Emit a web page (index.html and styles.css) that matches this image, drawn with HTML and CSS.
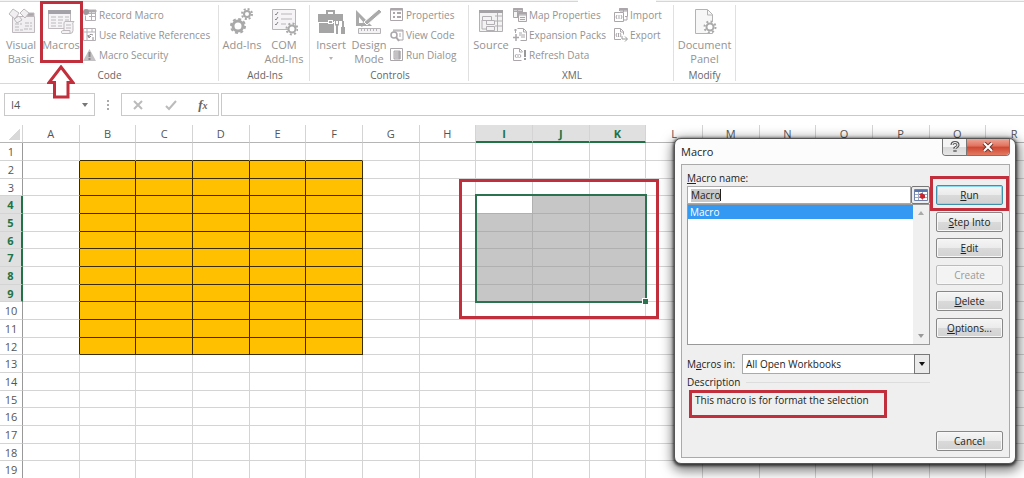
FILE: index.html
```
<!DOCTYPE html>
<html lang="en">
<head>
<meta charset="utf-8">
<title>Macro</title>
<link rel="stylesheet" href="styles.css">
</head>
<body>
<main class="app">
  <div class="tabstrip"><span class="tabstrip-active"></span></div>
  <div class="ribbon">
    <section class="group group-code">
      <div class="group-body">
        <button class="big"><svg width="28" height="28" viewBox="0 0 28 28" fill="#f1eff1" stroke="#bdb9bd"><path d="M5.500 8.500h22v16h-22z"/><path d="M20 5h7v3h-7z" fill="#a9a5a9"/><path d="M8 16h7M8 19h5M8 22h8M18 15h7M18 18h7M17 21h8" stroke-dasharray="4 1"/><path d="M2 6l4-5 6 4-4 6zM13 5l4-4 5 4-4 5zM7 11l5-3 3 4-5 3z"/></svg><span>Visual<br>Basic</span></button>
        <button class="big marked"><svg width="28" height="28" viewBox="0 0 28 28" fill="#f5f3f5" stroke="#bdb9bd"><path d="M1.500 2.500h22v18h-22z"/><path d="M1 2h23v4H1z" fill="#a5a1a8" stroke="none"/><path d="M4 9h5M11 9h5M18 9h4M4 12h5M11 12h5M18 12h4M4 15h5M11 15h4M4 18h5M11 18h4"/><path d="M18 13.500h9q-2 1-1 4v5q0 3-3 3h-8q-2-3 2-3V15q0-1 1-1.500zM16 22.500h7v3M19 17h5M19 20h5"/></svg><span>Macros</span></button>
        <div class="list">
          <button class="small"><svg width="14" height="14" viewBox="0 0 14 14" fill="none" stroke="#b4b0b4"><path d="M4.500 2.500h8v10h-10v-5M5 5.500h7M6 8.500h6M8.500 3v9"/><path d="M4 2h9v2H4z" fill="#aaa6aa"/><circle cx="3" cy="4" r="3" fill="#9d999d" stroke="none"/></svg>Record Macro</button>
          <button class="small"><svg width="14" height="14" viewBox="0 0 14 14" fill="none" stroke="#b4b0b4"><path d="M.5.500h12v12H.5zM1 4h12M4 1v12M9 1v3M4 8h2"/><path d="M6 9q0-4 4-2m-5 0l1 3 2-2M10 9v3" stroke="#8f8b8f"/></svg>Use Relative References</button>
          <button class="small"><svg width="14" height="14" viewBox="0 0 14 14"><path d="M6.500 1L13 13H0z" fill="#c4c1c4"/><path d="M6.500 4v5M6.500 10v2" stroke="#888" stroke-width="2"/></svg>Macro Security</button>
        </div>
      </div>
      <h2>Code</h2>
    </section>
    <section class="group group-addins">
      <div class="group-body">
        <button class="big"><svg width="28" height="28" viewBox="0 0 28 28" fill="none" stroke="#a9a9a9"><circle cx="10" cy="18" r="5" stroke-width="3"/><circle cx="10" cy="18" r="7" stroke-width="2" stroke-dasharray="3 2.500"/><circle cx="19" cy="6" r="3" stroke-width="2"/><circle cx="19" cy="6" r="5" stroke-width="2" stroke-dasharray="2 1.930"/></svg><span>Add-Ins</span></button>
        <button class="big"><svg width="28" height="28" viewBox="0 0 28 28" fill="none" stroke="#b8b6b8"><path d="M2.500 1.500h23v20h-23z" fill="#f6f4f6"/><path d="M11 6h11M11 11h11M11 16h5"/><path d="M5 6l1 1 2-3M5 11l1 1 2-3M5 16l1 1 2-3" stroke="#888"/><circle cx="22" cy="21" r="3.500" stroke="#aaa" stroke-width="2" fill="#fff"/><circle cx="22" cy="21" r="5.500" stroke="#aaa" stroke-width="2" stroke-dasharray="2 2.300"/></svg><span>COM<br>Add-Ins</span></button>
      </div>
      <h2>Add-Ins</h2>
    </section>
    <section class="group group-controls">
      <div class="group-body">
        <button class="big"><svg width="28" height="28" viewBox="0 0 28 28" fill="#a5a5a5"><path d="M9 6V2h9v4h-2V4h-5v2z"/><path d="M1 6h25v8H1zM2 15h15v10H2z"/><path d="M11 12h5v4h-5z" fill="#fff"/><path d="M12 13h3v2h-3z"/><path d="M17 13h11v14H17z" fill="#fff"/><path d="M18 13v4l1 1v8h2v-8l1-1v-4h-1v3h-2v-3zM25 13h2v6h-2zM24 19h4v7h-4z"/></svg><span>Insert</span><i class="caret"></i></button>
        <button class="big"><svg width="28" height="28" viewBox="0 0 28 28"><path d="M1 2v16h16zm3 7l5 6H4z" fill="#aaa"/><path d="M9 14l3 3L27 4l-3-3z" fill="#aaa" stroke="#fff"/><path d="M8 14l-2 5 5-2z" fill="#aaa"/><path d="M3.500 20.500h22v5h-22z" fill="#f4f3f4" stroke="#b5b3b5"/><path d="M6.500 21v2M9.500 21v2M12.500 21v2M15.500 21v2M18.500 21v2M21.500 21v2" stroke="#b5b3b5"/></svg><span>Design<br>Mode</span></button>
        <div class="list">
          <button class="small"><svg width="14" height="14" viewBox="0 0 14 14" fill="none" stroke="#aaa6aa"><path d="M.5.500h12v12H.5z"/><path d="M1 1.500h12M3 5h2M3 9h2M7 5h4M7 9h4" stroke-width="2"/></svg>Properties</button>
          <button class="small"><svg width="14" height="14" viewBox="0 0 14 14" fill="none" stroke="#aaa6aa"><path d="M3 2h10v10H9M3 3h10M9 6h2M9 8h2"/><circle cx="4" cy="7" r="3" stroke-width="1.500"/><path d="M6 9l3 4" stroke-width="2"/></svg>View Code</button>
          <button class="small"><svg width="14" height="14" viewBox="0 0 14 14" fill="none" stroke="#aaa6aa"><path d="M.5.500h12v12H.5z"/><path d="M4 3h6v8H4zM5 5h4M5 7h4M5 9h4" fill="#ddd"/><path d="M9.500 3v8" stroke-width="2"/></svg>Run Dialog</button>
        </div>
      </div>
      <h2>Controls</h2>
    </section>
    <section class="group group-xml">
      <div class="group-body">
        <button class="big"><svg width="28" height="28" viewBox="0 0 28 28" fill="#f4f3f4" stroke="#b3b0b3"><path d="M2.500 2.500h23v21h-23z"/><path d="M2 2h24v3H2z" fill="#a6a3a6" stroke="none"/><path d="M5.500 8.500h9v4h-9zM9.500 12.500h8v4h-8zM9.500 18.500h8v4h-8zM5 12v9h4M18 8h7M18 13h7M18 18h7M20.500 5v18" /></svg><span>Source</span></button>
        <div class="list">
          <button class="small"><svg width="14" height="14" viewBox="0 0 14 14" fill="#f7f6f7" stroke="#aaa6aa"><path d="M.5.500h9v9h-9zM1 3.500h8M4.500 1v8"/><path d="M5.500 4.500h8v9h-8zM6 7h7M7 9.500h5M7 11.500h5"/><path d="M0 1.500h10M5 5.500h9" stroke-width="2"/></svg>Map Properties</button>
          <button class="small"><svg width="14" height="14" viewBox="0 0 14 14" fill="none" stroke="#aaa6aa"><path d="M4.500.500h6l3 3v9h-6M10.500 1v3h3M6 5h3M6 7h6M8 9h4M1 2h3M2.500 1v4"/><path d="M0 9.500h6M3 6v7" stroke-width="1.500"/></svg>Expansion Packs</button>
          <button class="small"><svg width="14" height="14" viewBox="0 0 14 14" fill="none" stroke="#aaa6aa"><path d="M8.500 12.500h-8V.500h6l3 3M6.500 1v3h3"/><path d="M2 8l1.500-2M2 8l1.500 2M8 8L6.500 6M8 8l-1.500 2M5 6v4"/><path d="M12 2v7M12 10v2" stroke="#999" stroke-width="2"/></svg>Refresh Data</button>
        </div>
        <div class="list list-second">
          <button class="small"><svg width="14" height="14" viewBox="0 0 14 14" fill="none" stroke="#aaa6aa"><path d="M.5 4.500h9v9h-9zM5.500 3V.500h8v8H11M6 3h7M9.500 1v3"/><path d="M5 1.500h9" stroke-width="2"/><path d="M2 9l1-2M2 9l1 2M8 9L7 7M8 9l-1 2M5 7v4M13 9v3h-3"/></svg>Import</button>
          <button class="small"><svg width="14" height="14" viewBox="0 0 14 14" fill="none" stroke="#aaa6aa"><path d="M7 11.500H.5V.500h6l3 3v3M6.500 1v3h3"/><path d="M2 7l1-2M2 7l1 2M7 7L6 5M7 7L6 9M4.500 5v4"/><path d="M8 8v3h5M11 8.500l2.500 2.500-2.500 2.500" stroke="#999"/></svg>Export</button>
        </div>
      </div>
      <h2>XML</h2>
    </section>
    <section class="group group-modify">
      <div class="group-body">
        <button class="big"><svg width="28" height="28" viewBox="0 0 28 28" fill="none" stroke="#b5b2b5"><path d="M4.500 1.500h12l5 5v19h-17z" fill="#f8f7f8"/><path d="M16.500 2v5h5"/><circle cx="19" cy="19" r="6" fill="#fff" stroke="none"/><circle cx="19" cy="19" r="3.500" stroke="#aaa" stroke-width="2"/><circle cx="19" cy="19" r="5.500" stroke="#aaa" stroke-width="2" stroke-dasharray="2 2.300"/></svg><span>Document<br>Panel</span></button>
      </div>
      <h2>Modify</h2>
    </section>
    <svg class="arrow" width="28" height="34" viewBox="0 0 28 34"><path d="M14 2L26 17.500H21V32H7.500V17.500H2z" fill="#fff" stroke="#c22f3c" stroke-width="3"/></svg>
  </div>

  <div class="formula">
    <div class="namebox"><input class="name-input" value="I4" aria-label="Name box"><i class="name-caret"></i></div>
    <svg class="dots" width="3" height="12" viewBox="0 0 3 12"><path d="M0 1h2v2H0zM0 5h2v2H0zM0 9h2v2H0z" fill="#aaa"/></svg>
    <div class="fx">
      <button aria-label="Cancel entry"><svg width="12" height="12" viewBox="0 0 12 12"><path d="M2 2l8 8M10 2l-8 8" stroke="#bbb" stroke-width="2"/></svg></button>
      <button aria-label="Enter"><svg width="12" height="12" viewBox="0 0 12 12"><path d="M1 7l3 3 7-8" fill="none" stroke="#bbb" stroke-width="2"/></svg></button>
      <button class="fx-button">f<small>x</small></button>
    </div>
    <input class="formula-input" aria-label="Formula bar">
  </div>

  <div class="sheet">
    <table class="cells">
      <thead><tr><th class="corner"></th><th>A</th><th>B</th><th>C</th><th>D</th><th>E</th><th>F</th><th>G</th><th>H</th><th class="on">I</th><th class="on">J</th><th class="on">K</th><th>L</th><th>M</th><th>N</th><th>O</th><th>P</th><th>Q</th><th>R</th></tr></thead>
      <tbody>
        <tr class="above"><th>1</th><td><td><td><td><td><td><td><td><td><td><td><td><td><td><td><td><td><td></tr>
        <tr class="filled"><th>2</th><td><td><td><td><td><td><td><td><td><td><td><td><td><td><td><td><td><td></tr>
        <tr class="filled"><th>3</th><td><td><td><td><td><td><td><td><td><td><td><td><td><td><td><td><td><td></tr>
        <tr class="filled picked"><th>4</th><td><td><td><td><td><td><td><td><td class="active"><td><td><td><td><td><td><td><td><td></tr>
        <tr class="filled picked"><th>5</th><td><td><td><td><td><td><td><td><td><td><td><td><td><td><td><td><td><td></tr>
        <tr class="filled picked"><th>6</th><td><td><td><td><td><td><td><td><td><td><td><td><td><td><td><td><td><td></tr>
        <tr class="filled picked"><th>7</th><td><td><td><td><td><td><td><td><td><td><td><td><td><td><td><td><td><td></tr>
        <tr class="filled picked"><th>8</th><td><td><td><td><td><td><td><td><td><td><td><td><td><td><td><td><td><td></tr>
        <tr class="filled picked"><th>9</th><td><td><td><td><td><td><td><td><td><td><td><td><td><td><td><td><td><td></tr>
        <tr class="filled"><th>10</th><td><td><td><td><td><td><td><td><td><td><td><td><td><td><td><td><td><td></tr>
        <tr class="filled"><th>11</th><td><td><td><td><td><td><td><td><td><td><td><td><td><td><td><td><td><td></tr>
        <tr class="filled"><th>12</th><td><td><td><td><td><td><td><td><td><td><td><td><td><td><td><td><td><td></tr>
        <tr><th>13</th><td><td><td><td><td><td><td><td><td><td><td><td><td><td><td><td><td><td></tr>
        <tr><th>14</th><td><td><td><td><td><td><td><td><td><td><td><td><td><td><td><td><td><td></tr>
        <tr><th>15</th><td><td><td><td><td><td><td><td><td><td><td><td><td><td><td><td><td><td></tr>
        <tr><th>16</th><td><td><td><td><td><td><td><td><td><td><td><td><td><td><td><td><td><td></tr>
        <tr><th>17</th><td><td><td><td><td><td><td><td><td><td><td><td><td><td><td><td><td><td></tr>
        <tr><th>18</th><td><td><td><td><td><td><td><td><td><td><td><td><td><td><td><td><td><td></tr>
        <tr><th>19</th><td><td><td><td><td><td><td><td><td><td><td><td><td><td><td><td><td><td></tr>
      </tbody>
    </table>
    <div class="selection"><i class="handle"></i></div>
    <div class="callout"></div>
  </div>

  <section class="dialog" role="dialog" aria-labelledby="dialog-title">
    <header class="titlebar">
      <h1 id="dialog-title">Macro</h1>
      <div class="window-buttons">
        <button class="help" aria-label="Help"><svg width="12" height="12" viewBox="0 0 12 12" fill="none"><path d="M3 4q0-2.500 3-2.500t3 2.500q0 1.500-3 3v1M6 9v2" stroke="#555" stroke-width="3"/><path d="M3 4q0-2.500 3-2.500t3 2.500q0 1.500-3 3v1M6 9.500v1" stroke="#fff"/></svg></button>
        <button class="close" aria-label="Close"><svg width="12" height="10" viewBox="0 0 12 10"><path d="M2 1l8 8M10 1L2 9" stroke="#6b3530" stroke-width="4"/><path d="M2 1l8 8M10 1L2 9" stroke="#fff" stroke-width="2"/></svg></button>
      </div>
    </header>
    <div class="dialog-body">
      <div class="fields">
        <label class="name-label" for="macro-name"><u>M</u>acro name:</label>
        <div class="name-row">
          <div class="name-field"><input id="macro-name" value="Macro" size="5"><i class="cursor"></i></div>
          <button class="ref" aria-label="Select range"><svg width="14" height="12" viewBox="0 0 14 12"><path d="M.5.500h13v11H.5z" fill="#fff" stroke="#7082a8"/><path d="M1 2h12" stroke="#5673ae" stroke-width="2"/><path d="M1 5.500h12M1 8.500h12M4.500 3v8M8.500 3v8" stroke="#9bacc9"/><path d="M5 5l3-1 3 2v3l-3 1-3-2 1.500-1z" fill="#c9252c"/></svg></button>
        </div>
        <div class="listbox">
          <select size="8" aria-label="Macros"><option selected>Macro</option></select>
          <div class="scroll"><i class="up"></i><i class="down"></i></div>
        </div>
        <div class="in-row">
          <label for="macros-in">M<u>a</u>cros in:</label>
          <div class="dropdown"><select id="macros-in"><option>All Open Workbooks</option></select><i class="drop"></i></div>
        </div>
        <div class="description-title"><span>Description</span><hr></div>
        <p class="description">This macro is for format the selection</p>
      </div>
      <div class="actions">
        <div class="action-list">
          <button class="action run"><u>R</u>un</button>
          <button class="action"><u>S</u>tep Into</button>
          <button class="action"><u>E</u>dit</button>
          <button class="action" disabled>Create</button>
          <button class="action"><u>D</u>elete</button>
          <button class="action"><u>O</u>ptions...</button>
        </div>
        <button class="action">Cancel</button>
      </div>
    </div>
  </section>
</main>
</body>
</html>
```
FILE: styles.css
```
* { box-sizing: border-box; }
body { margin: 0; font-family: "Open Sans", "Noto Sans", sans-serif; font-size: 10px; color: #555; background: #fff; }
button, input, select { font: inherit; color: inherit; margin: 0; padding: 0; border: 0; border-radius: 0; background: none; }
h1, h2, p { margin: 0; font-weight: normal; }
svg { display: block; flex: none; }
.app { position: relative; height: 100vh; overflow: hidden; }

.tabstrip { height: 2px; background: #f4f4f4; border-bottom: 1px solid #d6d6d6; }
.tabstrip-active { display: block; width: 78px; height: 2px; margin-left: 578px; background: #fff; }

.ribbon { position: relative; display: flex; height: 82px; padding: 3px 0 0; border-bottom: 1px solid #d8d8d8; }
.group { display: flex; flex-direction: column; justify-content: space-between; margin-bottom: 2px; border-right: 1px solid #e0e0e0; }
.group-code { width: 219px; padding-left: 1px; }
.group-addins { width: 91px; padding-left: 2px; }
.group-controls { width: 159px; padding-left: 2px; }
.group-xml { width: 205px; padding-left: 2px; }
.group-modify { width: 62px; }
.group-body { display: flex; color: #939393; }
.group h2 { font-size: 10px; line-height: 12px; text-align: center; color: #666; }
.big { position: relative; display: flex; flex-direction: column; align-items: center; gap: 2px; width: 40px; padding-top: 3px; font-size: 11px; line-height: 14px; white-space: nowrap; }
.group-addins .big { width: 42px; }
.group-controls .big { width: 38px; }
.group-modify .big { width: 61px; }
.marked::after { content: ""; position: absolute; inset: -4px -2px auto -1px; height: 56px; border: 3px solid #c22f3c; }
.list { display: flex; flex-direction: column; margin-left: 2px; }
.list-second { margin-left: 8px; }
.small { display: flex; align-items: center; gap: 2px; height: 20px; font-size: 10px; white-space: nowrap; }
.caret { border: 2px solid transparent; border-top: 3px solid #b5b5b5; margin-top: 3px; }
.arrow { position: absolute; left: 47px; top: 63px; z-index: 2; }

.formula { display: flex; align-items: center; padding: 9px 0; }
.namebox { display: flex; align-items: center; width: 91px; height: 23px; margin-left: 4px; padding: 0 6px; border: 1px solid #c9c9c9; }
.name-input { flex: 1; min-width: 0; font-size: 11px; }
.name-caret { border: 3px solid transparent; border-top: 4px solid #777; border-bottom: 0; }
.dots { margin: 0 11px 0 12px; }
.fx { display: flex; align-items: center; justify-content: space-around; width: 98px; height: 23px; border: 1px solid #c9c9c9; }
.fx-button { font: italic bold 13px "Liberation Serif", serif; color: #666; }
.fx-button small { font-size: 10px; }
.formula-input { flex: 1; height: 23px; margin-left: 2px; border: 1px solid #c9c9c9; border-right: 0; }

.sheet { position: relative; overflow: hidden; }
.cells { width: 1043px; table-layout: fixed; border-collapse: separate; border-spacing: 0; }
.cells th, .cells td { padding: 0; border: 0 solid #d4d4d4; border-width: 0 1px 1px 0; font-weight: normal; }
.cells thead th { height: 18px; font-size: 11px; line-height: 15px; border-bottom-color: #b5b5b5; }
.cells tbody tr { height: 18px; }
.cells tbody tr:nth-child(3n) { height: 17px; }
.cells tbody th { font-size: 11px; line-height: 15px; border-right-color: #999; }
.cells .corner { width: 23px; background: linear-gradient(135deg, #fff 50%, #d9d9d9 50%) 9px 4px / 11px 11px no-repeat; }
.cells thead .on { background: #e0e0e0; border-bottom: 2px solid #217346; color: #217346; font-weight: bold; }
.picked th { background: #e0e0e0; }
.cells .picked th { border-right: 2px solid #217346; color: #217346; font-weight: bold; }
.above td:nth-child(n+3):nth-child(-n+7) { border-bottom-color: #3a2c00; }
.filled td:nth-child(2) { border-right-color: #3a2c00; }
.filled td:nth-child(n+3):nth-child(-n+7) { background: #ffc000; border-color: #3a2c00; }
.picked td:nth-child(n+10):nth-child(-n+12) { background: #c6c6c6; border-color: #b0b0b0; }
.cells .picked td.active:nth-child(10) { background: #fff; }
.selection { position: absolute; left: 475px; top: 69px; width: 172px; height: 109px; border: 2px solid #2b7350; }
.handle { position: absolute; right: -3px; bottom: -3px; width: 6px; height: 6px; background: #2b7350; border: 1px solid #fff; border-width: 1px 0 0 1px; }
.callout { position: absolute; left: 459px; top: 54px; width: 200px; height: 140px; border: 3px solid #c22f3c; }

.dialog { position: absolute; left: 674px; top: 138px; width: 342px; padding: 0 5px 5px 6px; border: 1px solid #555; border-radius: 7px; background: #fcfcfc; box-shadow: 0 1px 3px 1px rgba(0,0,0,.65), 1px 4px 12px 3px rgba(0,0,0,.5); color: #222; }
.titlebar { display: flex; justify-content: space-between; height: 25px; }
.titlebar h1 { font-size: 11px; line-height: 25px; }
.window-buttons { display: flex; height: 17px; border: 1px solid #777; border-top: 0; border-radius: 0 0 4px 4px; overflow: hidden; }
.window-buttons button { display: grid; place-items: center; }
.help { width: 23px; background: linear-gradient(#f4f4f4 50%, #d8d8d8 50%, #e6e6e6); }
.window-buttons .close { width: 43px; border-left: 1px solid #777; background: linear-gradient(#eda595, #e0705c 45%, #cf4630 50%, #e37a62); }
.dialog-body { display: flex; justify-content: space-between; padding: 5px 6px 6px 5px; border: 1px solid #aaa; background: #efefef; }
.fields { width: 243px; }
.name-label { display: block; line-height: 16px; }
.name-row { display: flex; height: 18px; }
.name-field { display: flex; align-items: center; flex: 1; padding-left: 3px; border: 1px solid #aaa; background: #fff; }
#macro-name { width: 29px; height: 13px; background: #c9c9c9; }
.cursor { width: 1px; height: 12px; background: #222; }
.ref { display: grid; place-items: center; width: 19px; border: 1px solid #777; border-radius: 2px; background: #eee; }
.listbox { display: flex; height: 141px; border: 1px solid #999; background: #fff; }
.listbox select { flex: 1; height: 139px; overflow: hidden; outline: 0; appearance: none; }
.listbox option { min-height: 12px; padding: 0 2px; line-height: 12px; }
.listbox option:checked { background: #3399f3 linear-gradient(#3399f3, #3399f3); color: #fff; -webkit-text-fill-color: #fff; }
.scroll { display: flex; flex-direction: column; justify-content: space-between; align-items: center; width: 16px; padding: 6px 0; background: #f0f0f0; }
.up, .down { border: 3px solid transparent; }
.up { border-top: 0; border-bottom: 4px solid #aaa; }
.down { border-bottom: 0; border-top: 4px solid #999; }
.in-row { display: flex; align-items: center; justify-content: space-between; margin-top: 9px; }
.dropdown { position: relative; width: 188px; height: 20px; border: 1px solid #aaa; background: #fff; }
.dropdown select { width: 100%; height: 18px; padding-left: 3px; appearance: none; }
.drop { position: absolute; right: -1px; top: -1px; width: 16px; height: 20px; border: 1px solid #777; background: #eaeaea; pointer-events: none; }
.drop::after { content: ""; position: absolute; left: 4px; top: 7px; border: 3px solid transparent; border-top: 4px solid #111; border-bottom: 0; }
.description-title { display: flex; align-items: center; gap: 6px; line-height: 16px; }
.description-title hr { flex: 1; margin: 0; border: 0; border-top: 1px solid #ddd; }
.description { width: 198px; height: 28px; margin-left: 2px; padding-left: 3px; border: 3px solid #c22f3c; line-height: 15px; white-space: nowrap; }
.actions { display: flex; flex-direction: column; justify-content: space-between; width: 67px; height: 281px; padding-top: 15px; }
.action-list { display: flex; flex-direction: column; justify-content: space-between; height: 153px; }
.action { height: 20px; border: 1px solid #888; border-radius: 2px; background: linear-gradient(#f5f5f5, #ebebeb 50%, #dadada 50%, #d2d2d2); box-shadow: inset 0 0 0 1px #f8f8f8; }
.action:disabled { border-color: #bbb; background: #f3f3f3; color: #999; }
.run { position: relative; border-color: #3f91ab; box-shadow: inset 0 0 0 1px #8bd8ef; }
.run::after { content: ""; position: absolute; inset: -10px -7px -7px; border: 3px solid #c22f3c; }
```
